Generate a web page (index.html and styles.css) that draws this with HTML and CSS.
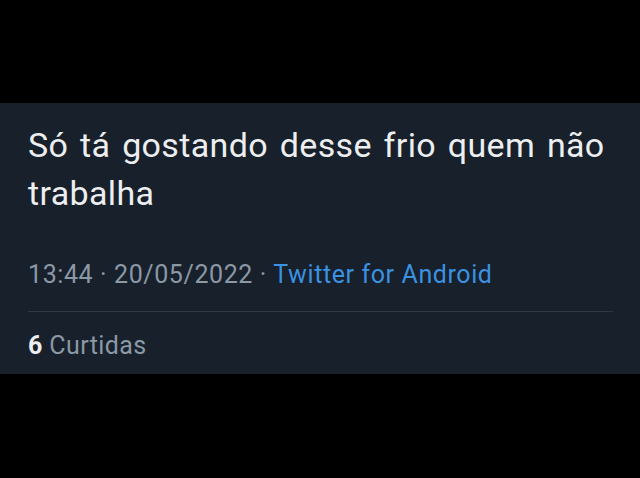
FILE: index.html
```html
<!DOCTYPE html>
<html lang="pt">
<head>
<meta charset="utf-8">
<link rel="stylesheet" href="styles.css">
</head>
<body>
<div class="page">
  <article class="tweet">
    <p class="text">Só tá gostando desse frio quem não trabalha</p>
    <div class="meta">13:44 · 20/05/2022 · <span class="source">Twitter for Android</span></div>
    <div class="stats"><span class="num">6</span> Curtidas</div>
  </article>
</div>
</body>
</html>
```
FILE: styles.css
```css
html, body {
  margin: 0;
  padding: 0;
  background: #000;
}
.page {
  width: 640px;
  height: 478px;
  padding-top: 103px;
  box-sizing: border-box;
}
.tweet {
  background: #17202b;
  height: 271px;
  box-sizing: border-box;
  padding: 18px 27px 0 28px;
  font-family: Roboto, "Liberation Sans", sans-serif;
}
.text {
  margin: 0;
  color: #eceeef;
  font-size: 34px;
  line-height: 48px;
  word-spacing: 3px;
  letter-spacing: 0.35px;
}
.meta {
  margin-top: 43px;
  color: #8b98a5;
  font-size: 25px;
  line-height: 30px;
  letter-spacing: 0.6px;
  padding-bottom: 21px;
  border-bottom: 1px solid #2f3942;
}
.source {
  color: #3a92e0;
}
.stats {
  margin-top: 19px;
  color: #8b98a5;
  font-size: 25px;
  line-height: 30px;
  letter-spacing: 0.4px;
}
.num {
  color: #eceeef;
  font-weight: 700;
}
```
